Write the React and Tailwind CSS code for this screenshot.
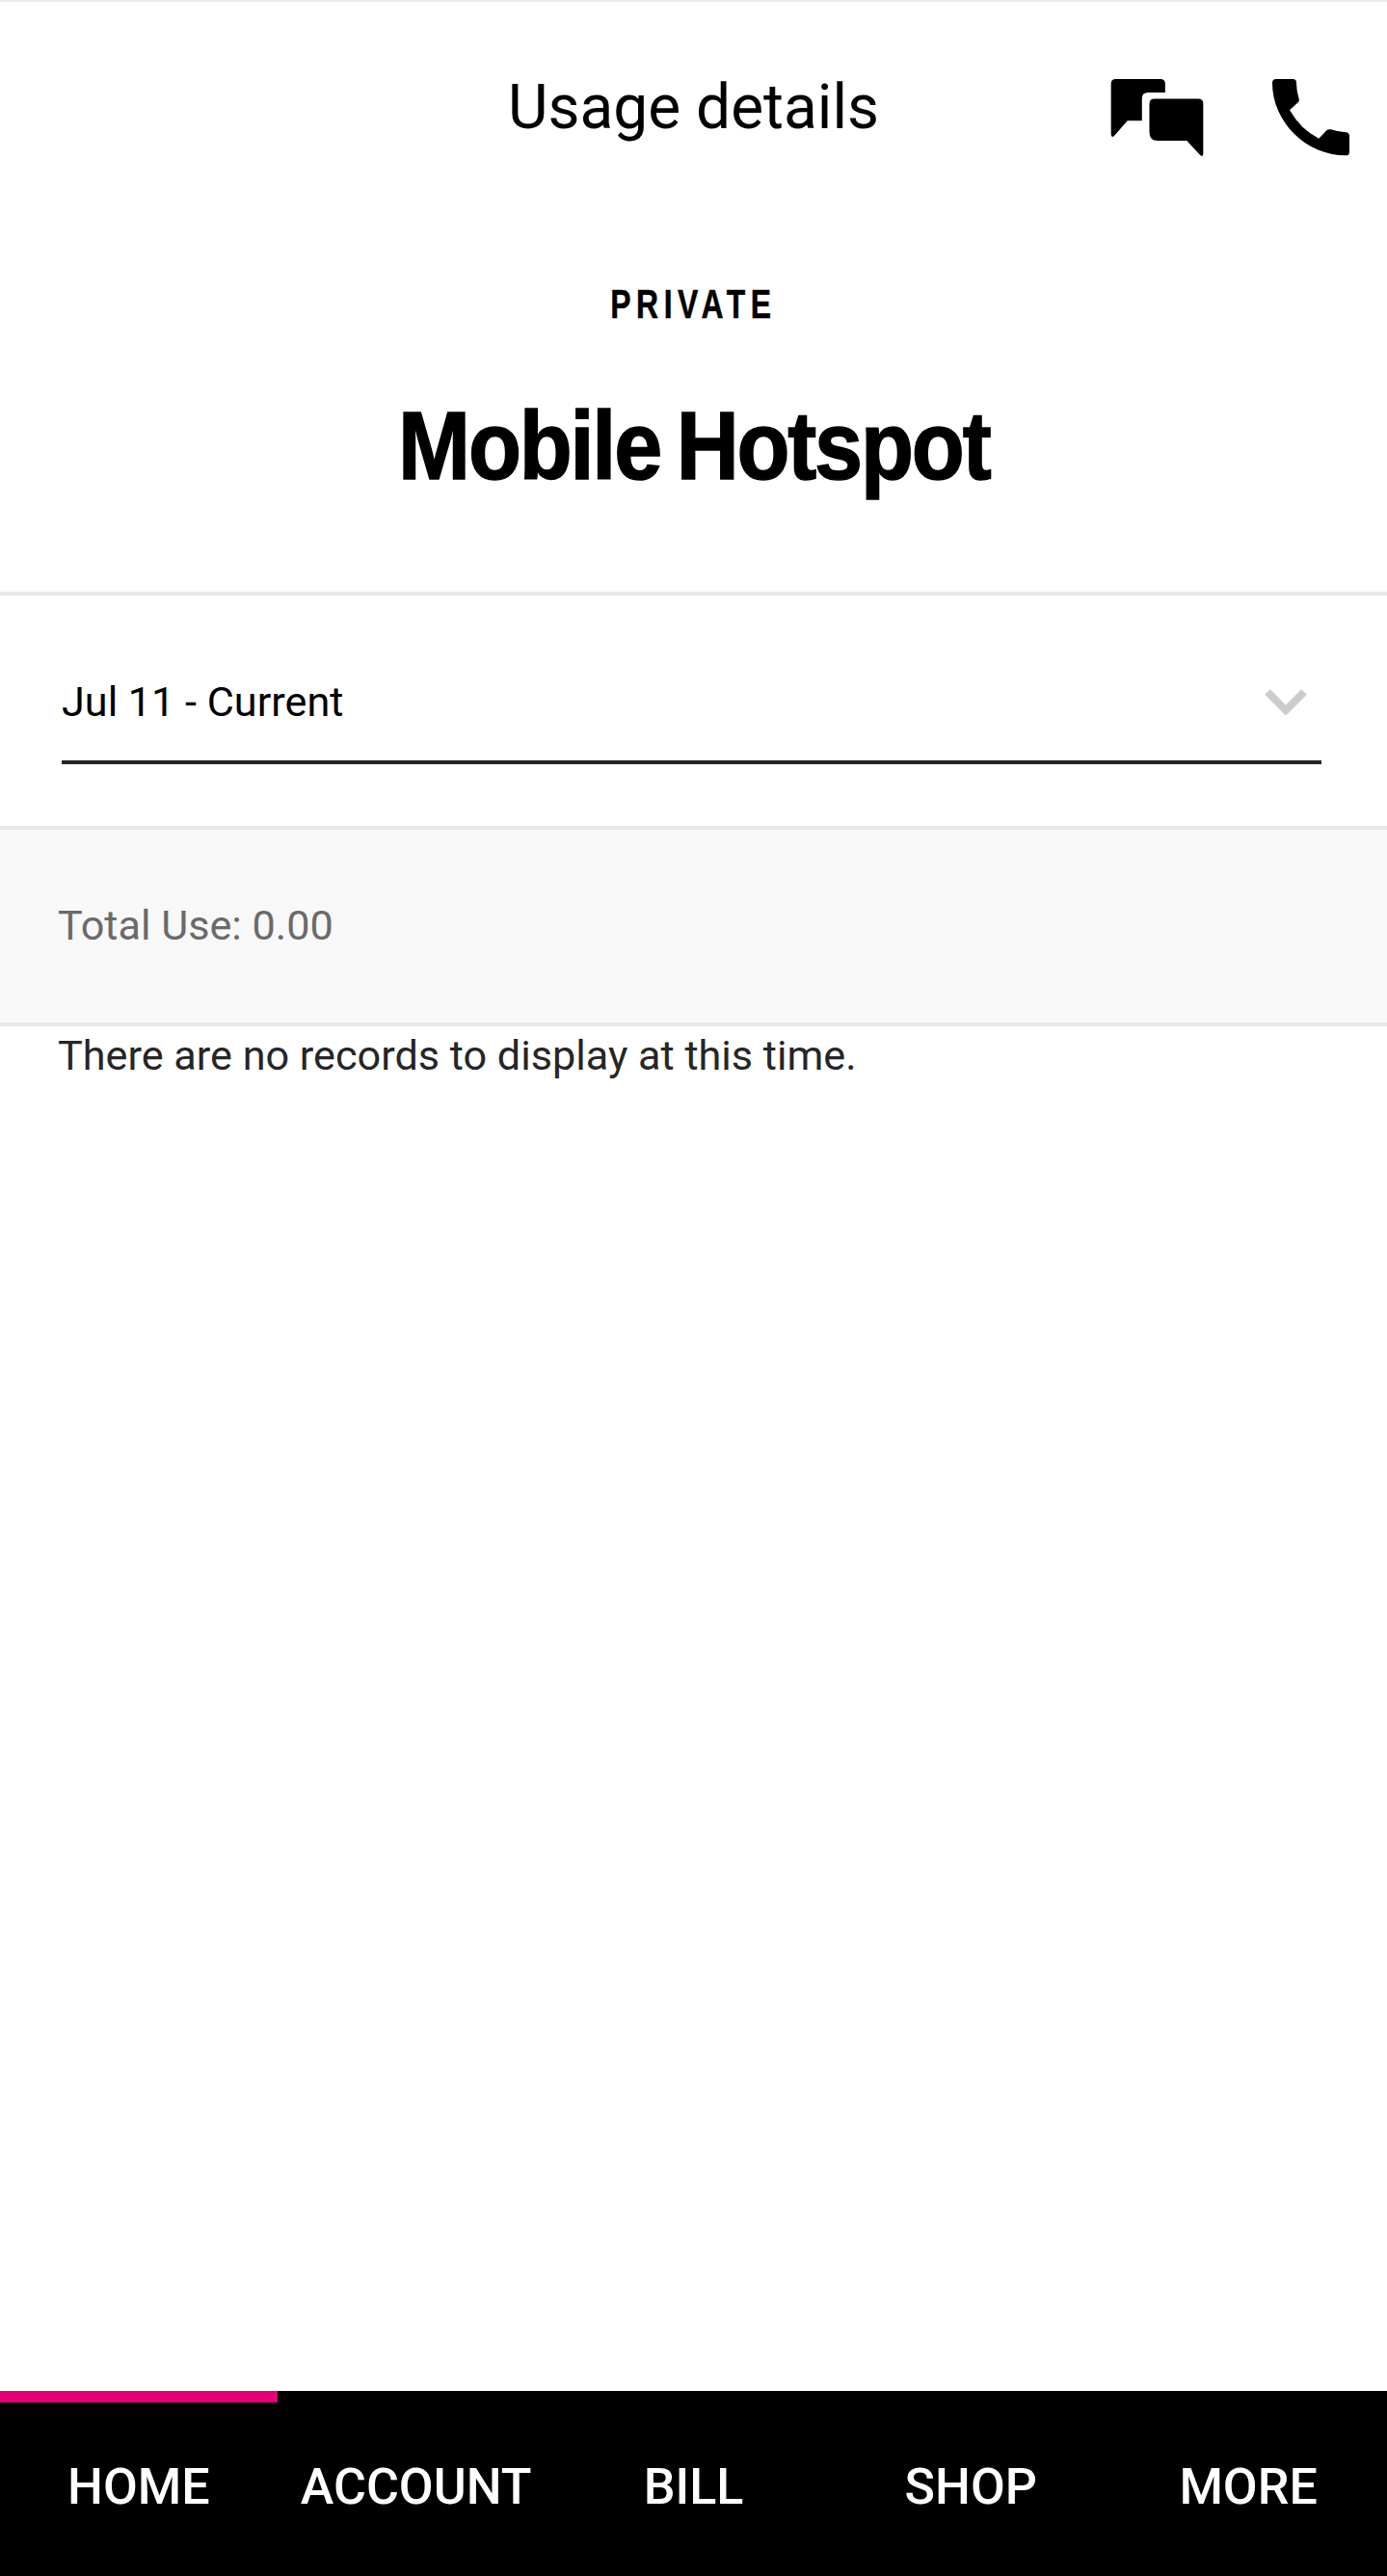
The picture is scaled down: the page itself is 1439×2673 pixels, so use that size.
const tabs = ['HOME', 'ACCOUNT', 'BILL', 'SHOP', 'MORE'];

function MessagesIcon() {
  return (
    <svg viewBox="152 240 296 245" className="w-[99px] h-[82px] fill-black">
      <path d="M172 243H310Q325 243 325 258V285H272Q253 285 253 304V372H208L166 420Q157 426 157 414V258Q157 243 172 243Z" />
      <path d="M292 304H428Q443 304 443 319V474Q443 487 433 478L392 434H302Q276 434 276 408V320Q276 304 292 304Z" />
    </svg>
  );
}

function PhoneIcon() {
  return (
    <svg viewBox="660 240 240 243" className="w-[80px] h-[81px] fill-black">
      <path d="M672 243H724Q735 243 735 254Q735 280 743 305Q745 312 740 316L714 340Q750 402 805 428L829 403Q834 398 842 400Q866 408 889 409Q900 410 900 421V470Q900 481 889 481C765 481 660 376 660 255Q660 243 672 243Z" />
    </svg>
  );
}

export default function App() {
  return (
    <div className="h-[2673px] flex flex-col bg-white font-['Roboto',sans-serif] overflow-hidden">
      <div className="h-[2px] bg-[#ebebeb]" />

      <header className="h-[219px] grid grid-cols-[1fr_auto_1fr] items-start">
        <div />
        <h1 className="text-[64px] leading-[76px] mt-[72px] text-black">Usage details</h1>
        <div className="flex justify-end gap-[70px] pr-[39px] pt-[79px]">
          <MessagesIcon />
          <PhoneIcon />
        </div>
      </header>

      <section className="h-[397px] border-b-4 border-[#e8e8e8] flex flex-col items-center">
        <p className="text-[42px] leading-[42px] mt-[74px] font-bold tracking-[7.3px] text-black font-['Liberation_Sans',sans-serif] scale-x-[0.76] [-webkit-text-stroke:0.5px_black]">PRIVATE</p>
        <h2 className="text-[100px] leading-[110px] mt-[70px] font-bold tracking-[-2.4px] [word-spacing:-7px] text-black font-['Liberation_Sans',sans-serif] scale-x-90 [-webkit-text-stroke:1.5px_black]">Mobile Hotspot</h2>
      </section>

      <section className="h-[243px] border-b-4 border-[#e8e8e8] px-[64px] pt-[32px]">
        <div className="h-[143px] pt-[18px] border-b-4 border-[#262626] mr-[4px] flex items-center justify-between">
          <span className="text-[43.2px] leading-[50px] text-black">Jul 11 - Current</span>
          <svg viewBox="0 0 44 27" className="w-[44px] h-[27px] mr-[15px] fill-none stroke-[#cccccc] stroke-[8px]">
            <path d="M3 3L22 22L41 3" />
          </svg>
        </div>
      </section>

      <section className="h-[204px] bg-[#f8f8f8] border-b-4 border-[#e8e8e8] flex items-center px-[60px]">
        <span className="text-[43.2px] leading-[50px] text-[#6a6a6a]">Total Use: 0.00</span>
      </section>

      <p className="flex-1 px-[60px] pt-[6px] text-[43.2px] leading-[50px] text-[#262626]">There are no records to display at this time.</p>

      <nav className="h-[192px] bg-black grid grid-cols-5">
        {tabs.map((tab, i) => (
          <div key={tab} className="flex flex-col items-center">
            <div className={i === 0 ? 'h-[12px] w-full bg-[#e20074]' : 'h-[12px] w-full'} />
            <span className="mt-[58px] text-[52px] leading-[60px] font-medium text-white">{tab}</span>
          </div>
        ))}
      </nav>
    </div>
  );
}
